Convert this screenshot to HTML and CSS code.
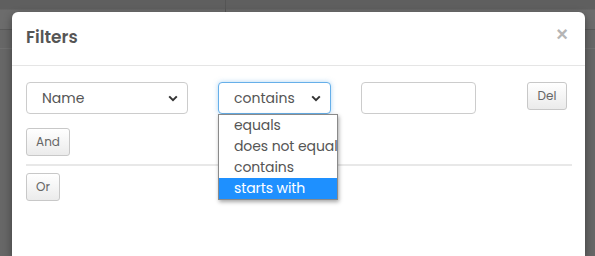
FILE: index.html
```
<!DOCTYPE html>
<html>
<head>
<meta charset="utf-8">
<link rel="stylesheet" href="styles.css">
</head>
<body>
<div class="page">
  <div class="topbar"><div class="tab"></div><div class="tab-rest"></div></div>
  <div class="subbar"></div>
</div>
<div class="modal">
  <div class="modal-header">
    <h4 class="title">Filters</h4>
    <span class="close">×</span>
  </div>
  <div class="modal-body">
    <div class="row">
      <div class="select sel-field">
        <span>Name</span>
        <svg class="chev" width="10" height="7" viewBox="0 0 10 7"><path d="M1.2 1.4 L5 5.2 L8.8 1.4" fill="none" stroke="#333" stroke-width="2"/></svg>
      </div>
      <div class="op-wrap">
        <div class="select sel-op focused">
          <span>contains</span>
          <svg class="chev" width="10" height="7" viewBox="0 0 10 7"><path d="M1.2 1.4 L5 5.2 L8.8 1.4" fill="none" stroke="#333" stroke-width="2"/></svg>
        </div>
        <ul class="dropdown">
          <li>equals</li>
          <li>does not equal</li>
          <li>contains</li>
          <li class="active">starts with</li>
        </ul>
      </div>
      <div class="input"></div>
      <div class="spacer"></div>
      <button class="btn btn-del">Del</button>
    </div>
    <button class="btn btn-and">And</button>
    <hr class="sep">
    <button class="btn btn-or">Or</button>
  </div>
</div>
</body>
</html>
```
FILE: styles.css
```
* { box-sizing: border-box; }
html, body { margin: 0; padding: 0; }
body {
  width: 595px;
  height: 256px;
  overflow: hidden;
  background: #676767;
  font-family: "Poppins", "Open Sans", "Noto Sans", sans-serif;
  position: relative;
}
.page { height: 256px; }
.topbar {
  height: 30px;
  display: flex;
  border-bottom: 1px solid #5a5a5a;
  background: linear-gradient(#5f5f5f 0, #5f5f5f 9px, #6c6c6c 10px, #6c6c6c 100%);
}
.tab { width: 226px; border-right: 1px solid #555; }
.tab-rest { flex: 1; }
.subbar { height: 19px; border-bottom: 1px solid #707070; }

.modal {
  position: absolute;
  left: 12px;
  top: 12px;
  width: 573px;
  height: 244px;
  background: #fff;
  border-radius: 6px 6px 0 0;
  box-shadow: 0 3px 9px rgba(0,0,0,0.4);
}
.modal-header {
  height: 54px;
  display: flex;
  align-items: center;
  justify-content: space-between;
  padding: 0 16px 0 14px;
  border-bottom: 1px solid #e5e5e5;
}
.title {
  margin: 0;
  font-size: 17px;
  font-weight: 600;
  color: #555;
  padding-bottom: 4px;
}
.close {
  font-family: "Liberation Sans", Arial, sans-serif;
  font-size: 20px;
  font-weight: bold;
  color: #b5b5b5;
  line-height: 1;
  margin-top: -9px;
  margin-right: 1px;
}
.modal-body { padding: 16px 14px 0 14px; }
.row { display: flex; align-items: flex-start; }
.select {
  height: 32px;
  border: 1px solid #ccc;
  border-radius: 4px;
  display: flex;
  align-items: center;
  justify-content: space-between;
  padding: 0 9px 0 15px;
  font-size: 14px;
  color: #555;
  background: #fff;
}
.sel-field { width: 162px; }
.op-wrap { position: relative; margin-left: 30px; }
.sel-op { width: 113px; }
.focused {
  border-color: #66afe9;
  box-shadow: 0 0 5px rgba(102,175,233,0.5);
}
.chev { display: block; margin-top: 1px; }
.dropdown {
  position: absolute;
  left: 0;
  top: 32px;
  width: 120px;
  margin: 0;
  padding: 0;
  list-style: none;
  background: #fff;
  border: 1px solid #8a8a8a;
  box-shadow: 1px 2px 4px rgba(0,0,0,0.35);
  z-index: 5;
}
.dropdown li {
  height: 21px;
  line-height: 21px;
  padding-left: 15px;
  font-size: 14px;
  color: #555;
  white-space: nowrap;
  letter-spacing: -0.1px;
}
.dropdown li.active { background: #1e90ff; color: #fff; }
.input {
  margin-left: 30px;
  width: 115px;
  height: 32px;
  border: 1px solid #ccc;
  border-radius: 4px;
}
.spacer { flex: 1; }
.btn {
  display: block;
  font-family: inherit;
  font-size: 12px;
  color: #666;
  background: linear-gradient(#fff, #ebebeb);
  border: 1px solid #c8c8c8;
  border-radius: 3px;
  padding: 0;
  height: 28px;
}
.btn-del { width: 40px; height: 28px; margin-right: 4px; }
.btn-and { width: 44px; margin-top: 14px; }
.btn-or { width: 34px; }
.sep {
  margin: 8px 0 7px 0;
  border: 0;
  border-top: 2px solid #e8e8e8;
  width: 546px;
}
```
